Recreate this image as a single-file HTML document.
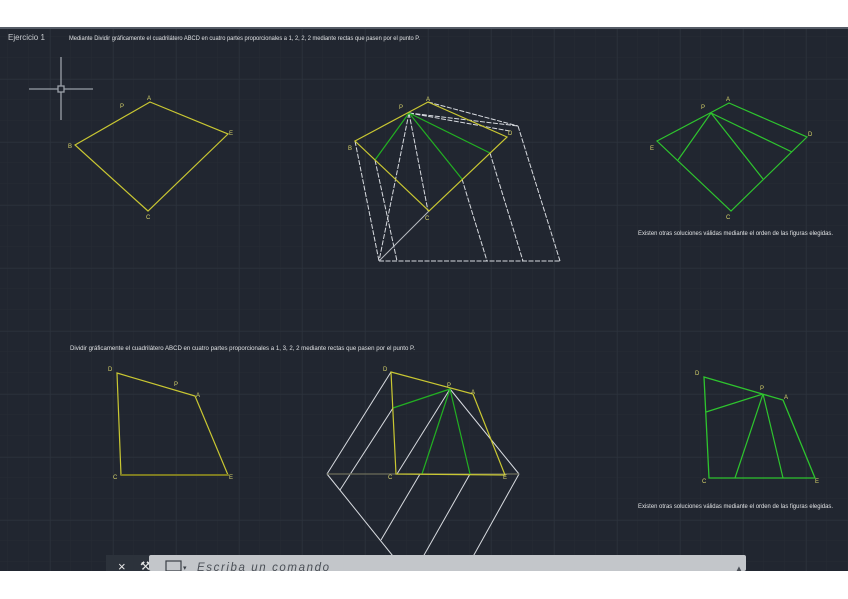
<!DOCTYPE html>
<html><head><meta charset="utf-8"><style>
html,body{margin:0;padding:0;background:#fff;width:848px;height:599px;overflow:hidden}
svg{display:block}
text{font-family:"Liberation Sans",sans-serif}
</style></head><body>
<svg width="848" height="599" viewBox="0 0 848 599" xmlns="http://www.w3.org/2000/svg">
<defs>
<pattern id="g" width="21" height="21" patternUnits="userSpaceOnUse" x="8" y="16">
<path d="M21 0V21M0 21H21" stroke="#262c35" stroke-width="1" fill="none"/>
</pattern>
<pattern id="G" width="63" height="63" patternUnits="userSpaceOnUse" x="50" y="16">
<path d="M0 0V63M0 0H63" stroke="#2e353f" stroke-width="1" fill="none"/>
</pattern>
</defs>
<rect x="0" y="28" width="848" height="543" fill="#212630"/>
<rect x="0" y="28" width="848" height="543" fill="url(#g)"/>
<rect x="0" y="28" width="848" height="543" fill="url(#G)"/>
<rect x="0" y="27" width="848" height="2" fill="#555c66"/>

<text x="8" y="40" font-size="8" fill="#c9ccd0">Ejercicio 1</text>
<text x="69" y="40" font-size="6" fill="#e0e2e4" textLength="351" lengthAdjust="spacingAndGlyphs">Mediante Dividir gráficamente el cuadrilátero ABCD en cuatro partes proporcionales a 1, 2, 2, 2 mediante rectas que pasen por el punto P.</text>

<g stroke="#9aa0a8" stroke-width="1.3" fill="none">
<line x1="61" y1="57" x2="61" y2="120"/><line x1="29" y1="89" x2="93" y2="89"/>
<rect x="58" y="86" width="6" height="6" fill="#212630"/>
</g>

<g font-size="6" fill="#d6d36a">
<polygon points="75,145 150,102 228,134 148,211" fill="none" stroke="#c9c732" stroke-width="1.2"/>
<text x="120" y="108">P</text><text x="147" y="100">A</text><text x="229" y="135">E</text><text x="146" y="219">C</text><text x="68" y="148">B</text>

<g stroke="#d8dbe0" stroke-width="1" fill="none" stroke-dasharray="5,1.5">
<line x1="379" y1="261" x2="560" y2="261"/>
<line x1="518" y1="126" x2="560" y2="261"/>
<line x1="428" y1="102" x2="518" y2="126"/>
<line x1="409" y1="113" x2="518" y2="126"/>
<line x1="409" y1="113" x2="510" y2="131"/>
<line x1="355" y1="141" x2="379" y2="261"/>
<line x1="375" y1="160" x2="397" y2="261"/>
<line x1="409" y1="113" x2="379" y2="261"/>
<line x1="409" y1="113" x2="428" y2="211"/>
<line x1="462" y1="179" x2="487" y2="261"/>
<line x1="490" y1="153" x2="523" y2="261"/>
</g>
<line x1="429" y1="211" x2="379" y2="261" stroke="#b8bcc2" stroke-width="1"/>
<g stroke="#22b022" stroke-width="1.2">
<line x1="409" y1="113" x2="375" y2="160"/>
<line x1="409" y1="113" x2="462" y2="179"/>
<line x1="409" y1="113" x2="490" y2="153"/>
</g>
<polygon points="355,141 428,102 507,137 429,211" fill="none" stroke="#c9c732" stroke-width="1.2"/>
<text x="399" y="109">P</text><text x="426" y="101">A</text><text x="508" y="135">D</text><text x="425" y="220">C</text><text x="348" y="150">B</text>

<polygon points="657,141 729,103 807,137 731,211" fill="none" stroke="#2ec42e" stroke-width="1.2"/>
<g stroke="#2ec42e" stroke-width="1.2">
<line x1="711" y1="113" x2="678" y2="160"/><line x1="711" y1="113" x2="763" y2="179"/><line x1="711" y1="113" x2="792" y2="152"/>
</g>
<text x="701" y="109">P</text><text x="726" y="101">A</text><text x="808" y="136">D</text><text x="726" y="219">C</text><text x="650" y="150">E</text>
</g>
<text x="638" y="235" font-size="6" fill="#e0e2e4" textLength="195" lengthAdjust="spacingAndGlyphs">Existen otras soluciones válidas mediante el orden de las figuras elegidas.</text>

<text x="70" y="350" font-size="6" fill="#e0e2e4" textLength="345" lengthAdjust="spacingAndGlyphs">Dividir gráficamente el cuadrilátero ABCD en cuatro partes proporcionales a 1, 3, 2, 2 mediante rectas que pasen por el punto P.</text>

<g font-size="6" fill="#d6d36a">
<polygon points="117,373 195,396 228,475 121,475" fill="none" stroke="#c9c732" stroke-width="1.2"/>
<line x1="121" y1="475" x2="228" y2="475" stroke="#7d7b22" stroke-width="2"/>
<text x="108" y="371">D</text><text x="174" y="386">P</text><text x="196" y="397">A</text><text x="229" y="479">E</text><text x="113" y="479">C</text>

<g stroke="#d8dbe0" stroke-width="1" fill="none">
<line x1="327" y1="474" x2="391" y2="372"/>
<line x1="327" y1="474" x2="405" y2="571"/>
<line x1="340" y1="490" x2="393" y2="408"/>
<line x1="397" y1="474" x2="450" y2="389"/>
<line x1="450" y1="389" x2="519" y2="474"/>
<line x1="519" y1="474" x2="465" y2="571"/>
<line x1="381" y1="540" x2="420" y2="474"/>
<line x1="415" y1="571" x2="470" y2="474"/>
</g>
<line x1="327" y1="474" x2="519" y2="474" stroke="#6c6e5a" stroke-width="1.2"/>
<g stroke="#22b022" stroke-width="1.2">
<line x1="450" y1="389" x2="393" y2="408"/><line x1="450" y1="389" x2="422" y2="474"/><line x1="450" y1="389" x2="470" y2="474"/>
</g>
<polygon points="391,372 473,394 505,475 396,474" fill="none" stroke="#c9c732" stroke-width="1.2"/>
<text x="383" y="371">D</text><text x="447" y="387">P</text><text x="471" y="394">A</text><text x="503" y="479">E</text><text x="388" y="479">C</text>

<polygon points="704,377 783,400 815,478 709,478" fill="none" stroke="#2ec42e" stroke-width="1.3"/>
<g stroke="#2ec42e" stroke-width="1.2">
<line x1="763" y1="394" x2="706" y2="412"/><line x1="763" y1="394" x2="735" y2="478"/><line x1="763" y1="394" x2="783" y2="478"/>
</g>
<text x="695" y="375">D</text><text x="760" y="390">P</text><text x="784" y="399">A</text><text x="815" y="483">E</text><text x="702" y="483">C</text>
</g>
<text x="638" y="508" font-size="6" fill="#e0e2e4" textLength="195" lengthAdjust="spacingAndGlyphs">Existen otras soluciones válidas mediante el orden de las figuras elegidas.</text>

<rect x="106" y="555" width="43" height="16" fill="#2c323b"/>
<text x="118" y="571" font-size="13" fill="#e8e8e8">×</text>
<text x="140" y="570" font-size="12" fill="#e8e8e8">⚒</text>
<rect x="149" y="555" width="597" height="16" rx="2" fill="#c3c6ca"/>
<rect x="166" y="561" width="15" height="10" fill="none" stroke="#3a3f46" stroke-width="1.2"/>
<text x="183" y="570" font-size="7" fill="#3a3f46">▾</text>
<text x="197" y="571" font-size="11.5" font-style="italic" fill="#4a4f56" font-family="Liberation Mono, monospace" textLength="132">Escriba un comando</text>
<text x="735" y="571" font-size="8" fill="#4a4f56">▲</text>
<rect x="0" y="571" width="848" height="28" fill="#fff"/>
</svg>
</body></html>
